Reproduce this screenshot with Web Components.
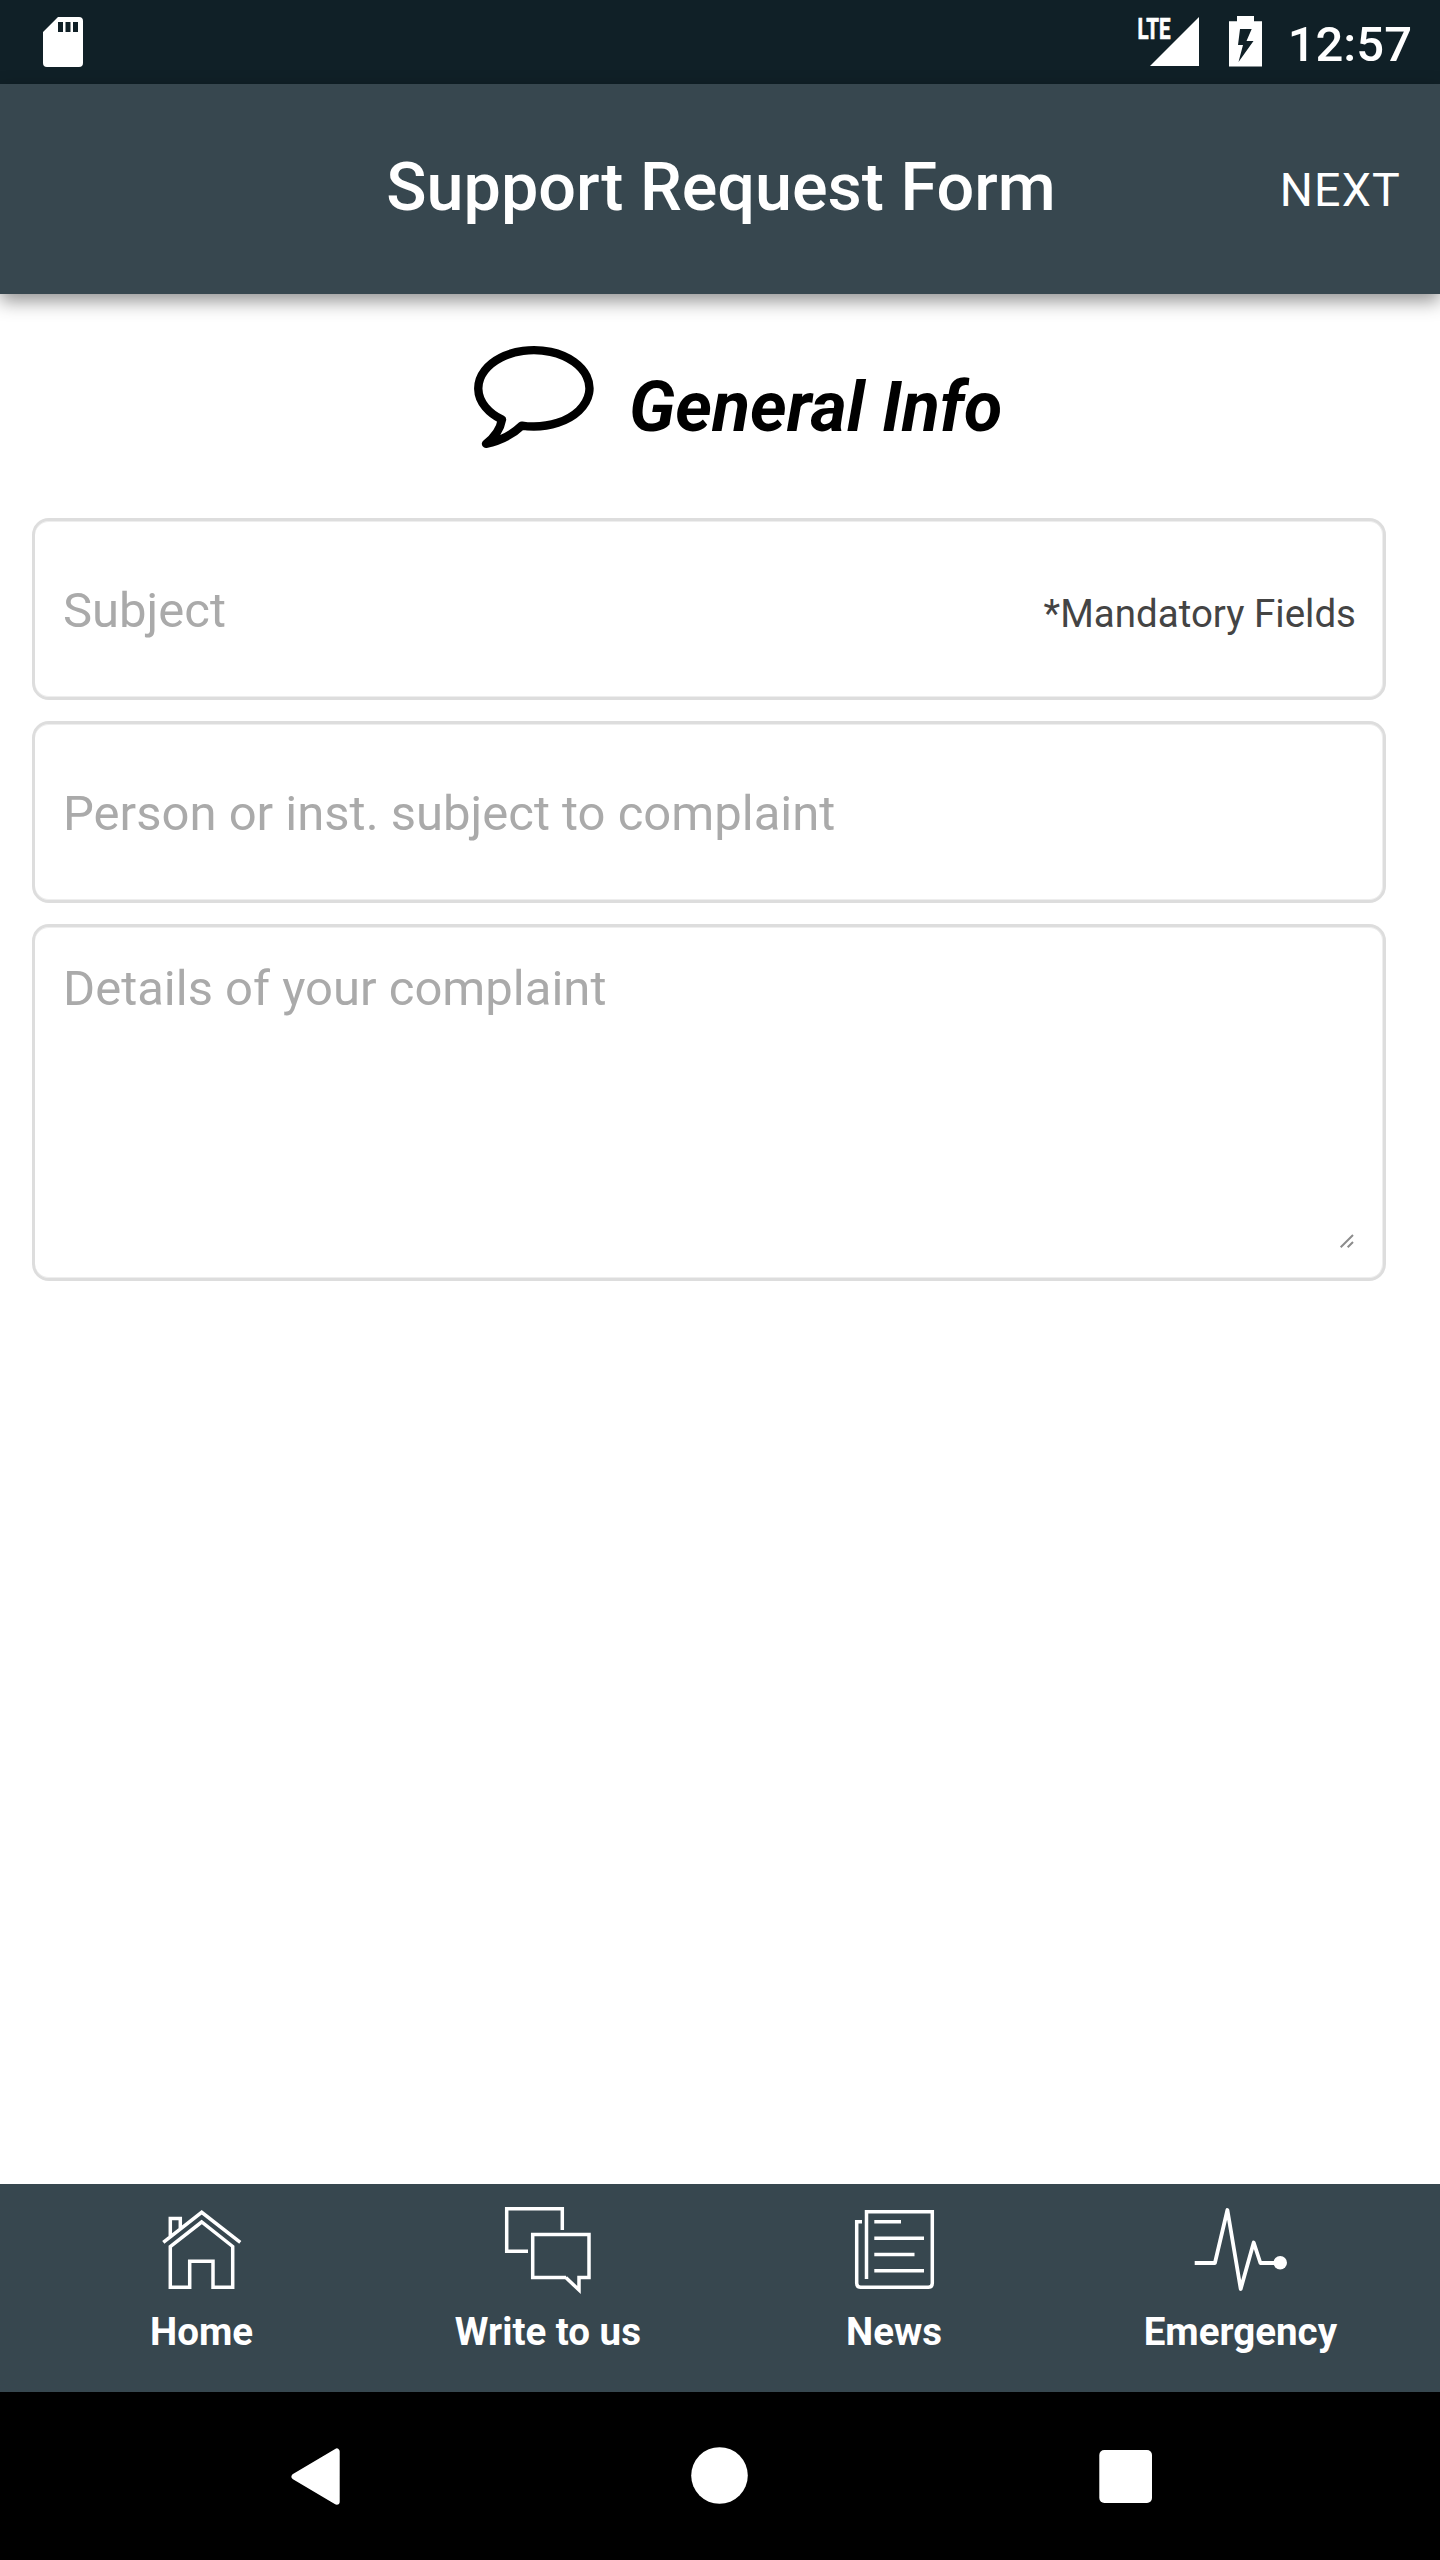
<!DOCTYPE html>
<html lang="en">
<head>
<meta charset="utf-8">
<title>Support Request Form</title>
<style>
html,body{margin:0;padding:0;background:#fff}
body{width:1440px;height:2560px;overflow:hidden;font-family:Roboto,"Liberation Sans",sans-serif}
</style>
</head>
<body>
<support-app></support-app>
<script>
const define = (name, html) => customElements.define(name, class extends HTMLElement {
  constructor() {
    super();
    const t = document.createElement('template');
    t.innerHTML = html;
    this.attachShadow({ mode: 'open' }).append(t.content.cloneNode(true));
  }
});

const ICONS = {
  sd: ['43 17 40 50', '<path fill="#fff" fill-rule="evenodd" d="M58 17H79a4 4 0 0 1 4 4V63a4 4 0 0 1-4 4H47a4 4 0 0 1-4-4V32ZM58 22v10h5V22ZM65.5 22v10h5V22ZM73 22v10h5V22Z"/>'],
  signal: ['1138 16 61 50', '<path fill="#fff" d="M1150 66 1199 17V66Z"/><text x="1137.500" y="39" fill="#fff" stroke="#fff" stroke-width=".7" font-size="29" font-weight="700" textLength="33" lengthAdjust="spacingAndGlyphs">LTE</text>'],
  battery: ['1229 16 33 51', '<path fill="#fff" fill-rule="evenodd" d="M1237 16h17v5.300h8V66.500h-33V21.300h8ZM1240 29 1238 45H1243L1238.500 62 1253.500 41H1246.500L1251.700 29Z"/>'],
  speech: ['470 342 128 110', '<path fill="none" stroke="#000" stroke-width="8.400" stroke-linejoin="round" d="M521.800 425.600C526 426.300 530 426.500 533.800 426.500A55.600 38.200 0 1 0 502 419.600C500.500 428 496.500 436 486 443.800C500 441 513 434 521.800 425.600Z"/>'],
  home: ['162 2200 80 96', '<g fill="none" stroke="#fff" stroke-width="3.500"><path d="M163.300 2242.300 201.700 2212.300 240.300 2242.300M170.300 2237.500V2218.500H180.300V2229"/><path d="M201.700 2222 170.300 2246.500V2287.300H189.700V2261.200H213V2287.300H232.700V2246.500Z"/></g>'],
  chat: ['504 2200 88 96', '<g fill="none" stroke="#fff" stroke-width="3.500"><path d="M562.300 2230V2208.700H506.700V2251.300H528"/><path d="M566 2277.500H532.700V2234.500H589V2277.500H579V2290L565.800 2277.500Z"/></g>'],
  news: ['855 2200 80 96', '<g fill="none" stroke="#fff" stroke-width="3.500"><path d="M866.500 2279V2211.700H932.300V2283.300Q932.300 2287.300 928.300 2287.300H860.700Q856.700 2287.300 856.700 2283.300V2221.700H862"/><path d="M874.300 2221.700H901M874.300 2238.200H924M874.300 2254.600H914.500M874.300 2270.700H924"/></g>'],
  pulse: ['1193 2200 96 96', '<path fill="none" stroke="#fff" stroke-width="3.800" stroke-linejoin="round" d="M1194.700 2263H1214.900L1227.400 2210 1240.700 2289 1253.700 2242.500 1260.400 2263H1278"/><circle cx="1280.200" cy="2262.700" r="6.800" fill="#fff"/>'],
  back: ['291 2447 49 59', '<path fill="#fff" stroke="#fff" stroke-width="6" stroke-linejoin="round" d="M294.500 2476.600 336.700 2451.500V2501.700Z"/>'],
  circle: ['691 2446 57 59', '<circle cx="719.500" cy="2475.500" r="28.300" fill="#fff"/>'],
  square: ['1099 2449 53 55', '<rect x="1099.300" y="2450" width="52.700" height="53" rx="5" fill="#fff"/>'],
  grip: ['1340 1234 14 14', '<path stroke="#8c8c8c" stroke-width="2" d="M1340.700 1247.300 1353 1235M1347.700 1247.300 1353 1242"/>']
};
customElements.define('ui-icon', class extends HTMLElement {
  constructor() { super(); this.attachShadow({ mode: 'open' }); }
  connectedCallback() {
    const [box, body] = ICONS[this.getAttribute('name')];
    const [, , w, h] = box.split(' ');
    this.shadowRoot.innerHTML = `<style>:host{display:block;flex:none}svg{display:block;overflow:visible}text{font-family:Roboto,sans-serif}</style><svg viewBox="${box}" width="${w}" height="${h}">${body}</svg>`;
  }
});

define('status-bar', `<style>
:host{display:flex;box-sizing:border-box;height:84px;background:#102027;color:#fff;padding:16px 28px 0 43px;align-items:flex-start}
.sd{margin-top:1px}.right{display:flex;margin-left:auto;align-items:flex-start}
.bat{margin-left:30px}.time{margin-left:26px;font-size:49px;line-height:57px;font-weight:500;white-space:nowrap}
</style><ui-icon class="sd" name="sd"></ui-icon><div class="right"><ui-icon name="signal"></ui-icon><ui-icon class="bat" name="battery"></ui-icon><div class="time">12:57</div></div>`);

define('app-header', `<style>
:host{display:grid;grid-template-columns:1fr auto 1fr;align-items:center;box-sizing:border-box;height:210px;background:#37474f;color:#fff;padding:0 39px 0 41px;box-shadow:0 7px 17.5px rgba(0,0,0,.43);position:relative}
h1{margin:0;grid-column:2;font-size:66.5px;font-weight:500;line-height:80px;padding-bottom:4px;white-space:nowrap}
.action{justify-self:end;font-size:46.5px;letter-spacing:1.2px;line-height:56px;padding-top:2px}
</style><h1><slot></slot></h1><div class="action"><slot name="action"></slot></div>`);

define('section-title', `<style>
:host{display:flex;align-items:flex-start;height:224px;padding:48px 0 0 470px;box-sizing:border-box}
h2{margin:25px 0 0 31px;font-size:70px;line-height:80px;font-weight:700;font-style:italic;white-space:nowrap;color:#000}
</style><ui-icon name="speech"></ui-icon><h2><slot></slot></h2>`);

define('form-field', `<style>
:host{display:flex;box-sizing:border-box;height:182px;border:3px solid #ddd;border-radius:17px;box-shadow:inset 0 1px #eee,inset 0 -1px #eee,inset -1px 0 #eee;padding:4px 27px 0 28px;align-items:center;color:#aaa;font-size:49px;line-height:58px;white-space:nowrap}
:host([multiline]){height:357px;align-items:flex-start;padding-top:33px}
.end{margin-left:auto;color:#444;font-size:38.5px;line-height:46px;padding-top:5px}
:host([multiline]) .end{align-self:flex-end;padding:0 2px 30px 0}
</style><span><slot></slot></span><div class="end"><slot name="end"></slot></div>`);

define('tab-item', `<style>
:host{display:flex;flex:1;flex-direction:column;align-items:center;padding-top:16px;color:#fff;font-weight:700;font-size:38.5px;line-height:46px;white-space:nowrap}
.label{margin-top:13px;padding-right:1px}
</style><slot name="icon"></slot><div class="label"><slot></slot></div>`);

define('tab-bar', `<style>
:host{display:flex;box-sizing:border-box;height:208px;background:#37474f;padding:0 26px 0 29px}
</style><slot></slot>`);

define('nav-bar', `<style>
:host{display:flex;box-sizing:border-box;height:168px;background:#000;padding:54px 288px 0 291px;justify-content:space-between;align-items:flex-start}
.back{margin-top:1px}.square{margin-top:3px}
</style><ui-icon class="back" name="back"></ui-icon><ui-icon name="circle"></ui-icon><ui-icon class="square" name="square"></ui-icon>`);

define('support-app', `<style>
:host{display:flex;flex-direction:column;width:1440px;height:2560px;background:#fff}
main{flex:1}.form{display:flex;flex-direction:column;gap:21px;padding:0 54px 0 32px}
</style>
<status-bar></status-bar>
<app-header>Support Request Form<span slot="action">NEXT</span></app-header>
<main>
<section-title>General Info</section-title>
<div class="form">
<form-field>Subject<span slot="end">*Mandatory Fields</span></form-field>
<form-field>Person or inst. subject to complaint</form-field>
<form-field multiline>Details of your complaint<ui-icon slot="end" name="grip"></ui-icon></form-field>
</div>
</main>
<tab-bar>
<tab-item><ui-icon slot="icon" name="home"></ui-icon>Home</tab-item>
<tab-item><ui-icon slot="icon" name="chat"></ui-icon>Write to us</tab-item>
<tab-item><ui-icon slot="icon" name="news"></ui-icon>News</tab-item>
<tab-item><ui-icon slot="icon" name="pulse"></ui-icon>Emergency</tab-item>
</tab-bar>
<nav-bar></nav-bar>`);
</script>
</body>
</html>
